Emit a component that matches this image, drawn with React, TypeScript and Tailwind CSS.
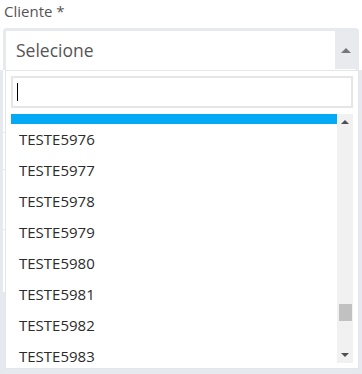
const items = ["TESTE5975", "TESTE5976", "TESTE5977", "TESTE5978", "TESTE5979", "TESTE5980", "TESTE5981", "TESTE5982", "TESTE5983"]

export default function App() {
  return (
    <div className="relative w-[362px] h-[374px] overflow-hidden bg-white font-['Open_Sans',sans-serif]">
      <label className="block pl-[4px] pt-[1px] text-[15px] leading-[20px] text-[#555]">Cliente *</label>

      {/* select */}
      <div className="mt-[7px] ml-[3px] w-[356px] border-[3px] border-b-0 border-[#e6e9ed] rounded-t-[4px] flex h-[42px]">
        <div className="flex-1 flex items-center pl-[10px] text-[17.5px] text-[#555] bg-white">Selecione</div>
        <div className="w-[21px] h-[38px] bg-[#e8eaed] flex items-center justify-center">
          <div className="w-0 h-0 border-l-[5px] border-r-[5px] border-b-[5px] border-l-transparent border-r-transparent border-b-[#777]" />
        </div>
      </div>

      {/* form rows under the dropdown */}
      <div className="flex flex-col">
        <div className="h-[63px] border-x-[3px] border-b border-[#e6e9ed]" />
        <div className="h-[37px] border-x-[3px] border-b border-[#e6e9ed]" />
        <div className="h-[60px] border-x-[3px] border-b border-[#e6e9ed]" />
        <div className="h-[63px] border-x-[3px] border-b border-[#e6e9ed]" />
        <div className="h-[81px] bg-[#e6e9ed]" />
      </div>

      {/* open dropdown */}
      <div className="absolute top-[70px] left-[5px] w-[354px] h-[299px] bg-white border border-[#e3e6ea] p-[5px] flex flex-col">
        <div className="h-[32px] border-2 border-[#e6e6e6] flex items-center">
          <span className="ml-[4px] w-[1px] h-[18px] bg-black" />
        </div>
        <div className="mt-[6px] h-[249px] flex overflow-hidden">
          <div className="flex-1 overflow-hidden">
            {items.map((t, i) => (
              <div
                key={t}
                className={
                  i === 0
                    ? "h-[31px] mt-[-21px] flex items-center pl-[8px] text-[15px] bg-[#03a9f4] text-white"
                    : "h-[31px] flex items-center pl-[8px] text-[15px] text-[#2b2b2b]"
                }
              >
                {t}
              </div>
            ))}
          </div>
          <div className="w-[16px] h-full bg-[#f1f1f1] flex flex-col">
            <div className="h-[16px] flex items-center justify-center">
              <div className="w-0 h-0 border-l-[4px] border-r-[4px] border-b-[4px] border-l-transparent border-r-transparent border-b-[#505050]" />
            </div>
            <div className="flex-1">
              <div className="mt-[174px] ml-[2px] w-[13px] h-[17px] bg-[#c1c1c1]" />
            </div>
            <div className="h-[16px] flex items-center justify-center">
              <div className="w-0 h-0 border-l-[4px] border-r-[4px] border-t-[4px] border-l-transparent border-r-transparent border-t-[#505050]" />
            </div>
          </div>
        </div>
      </div>
    </div>
  )
}
